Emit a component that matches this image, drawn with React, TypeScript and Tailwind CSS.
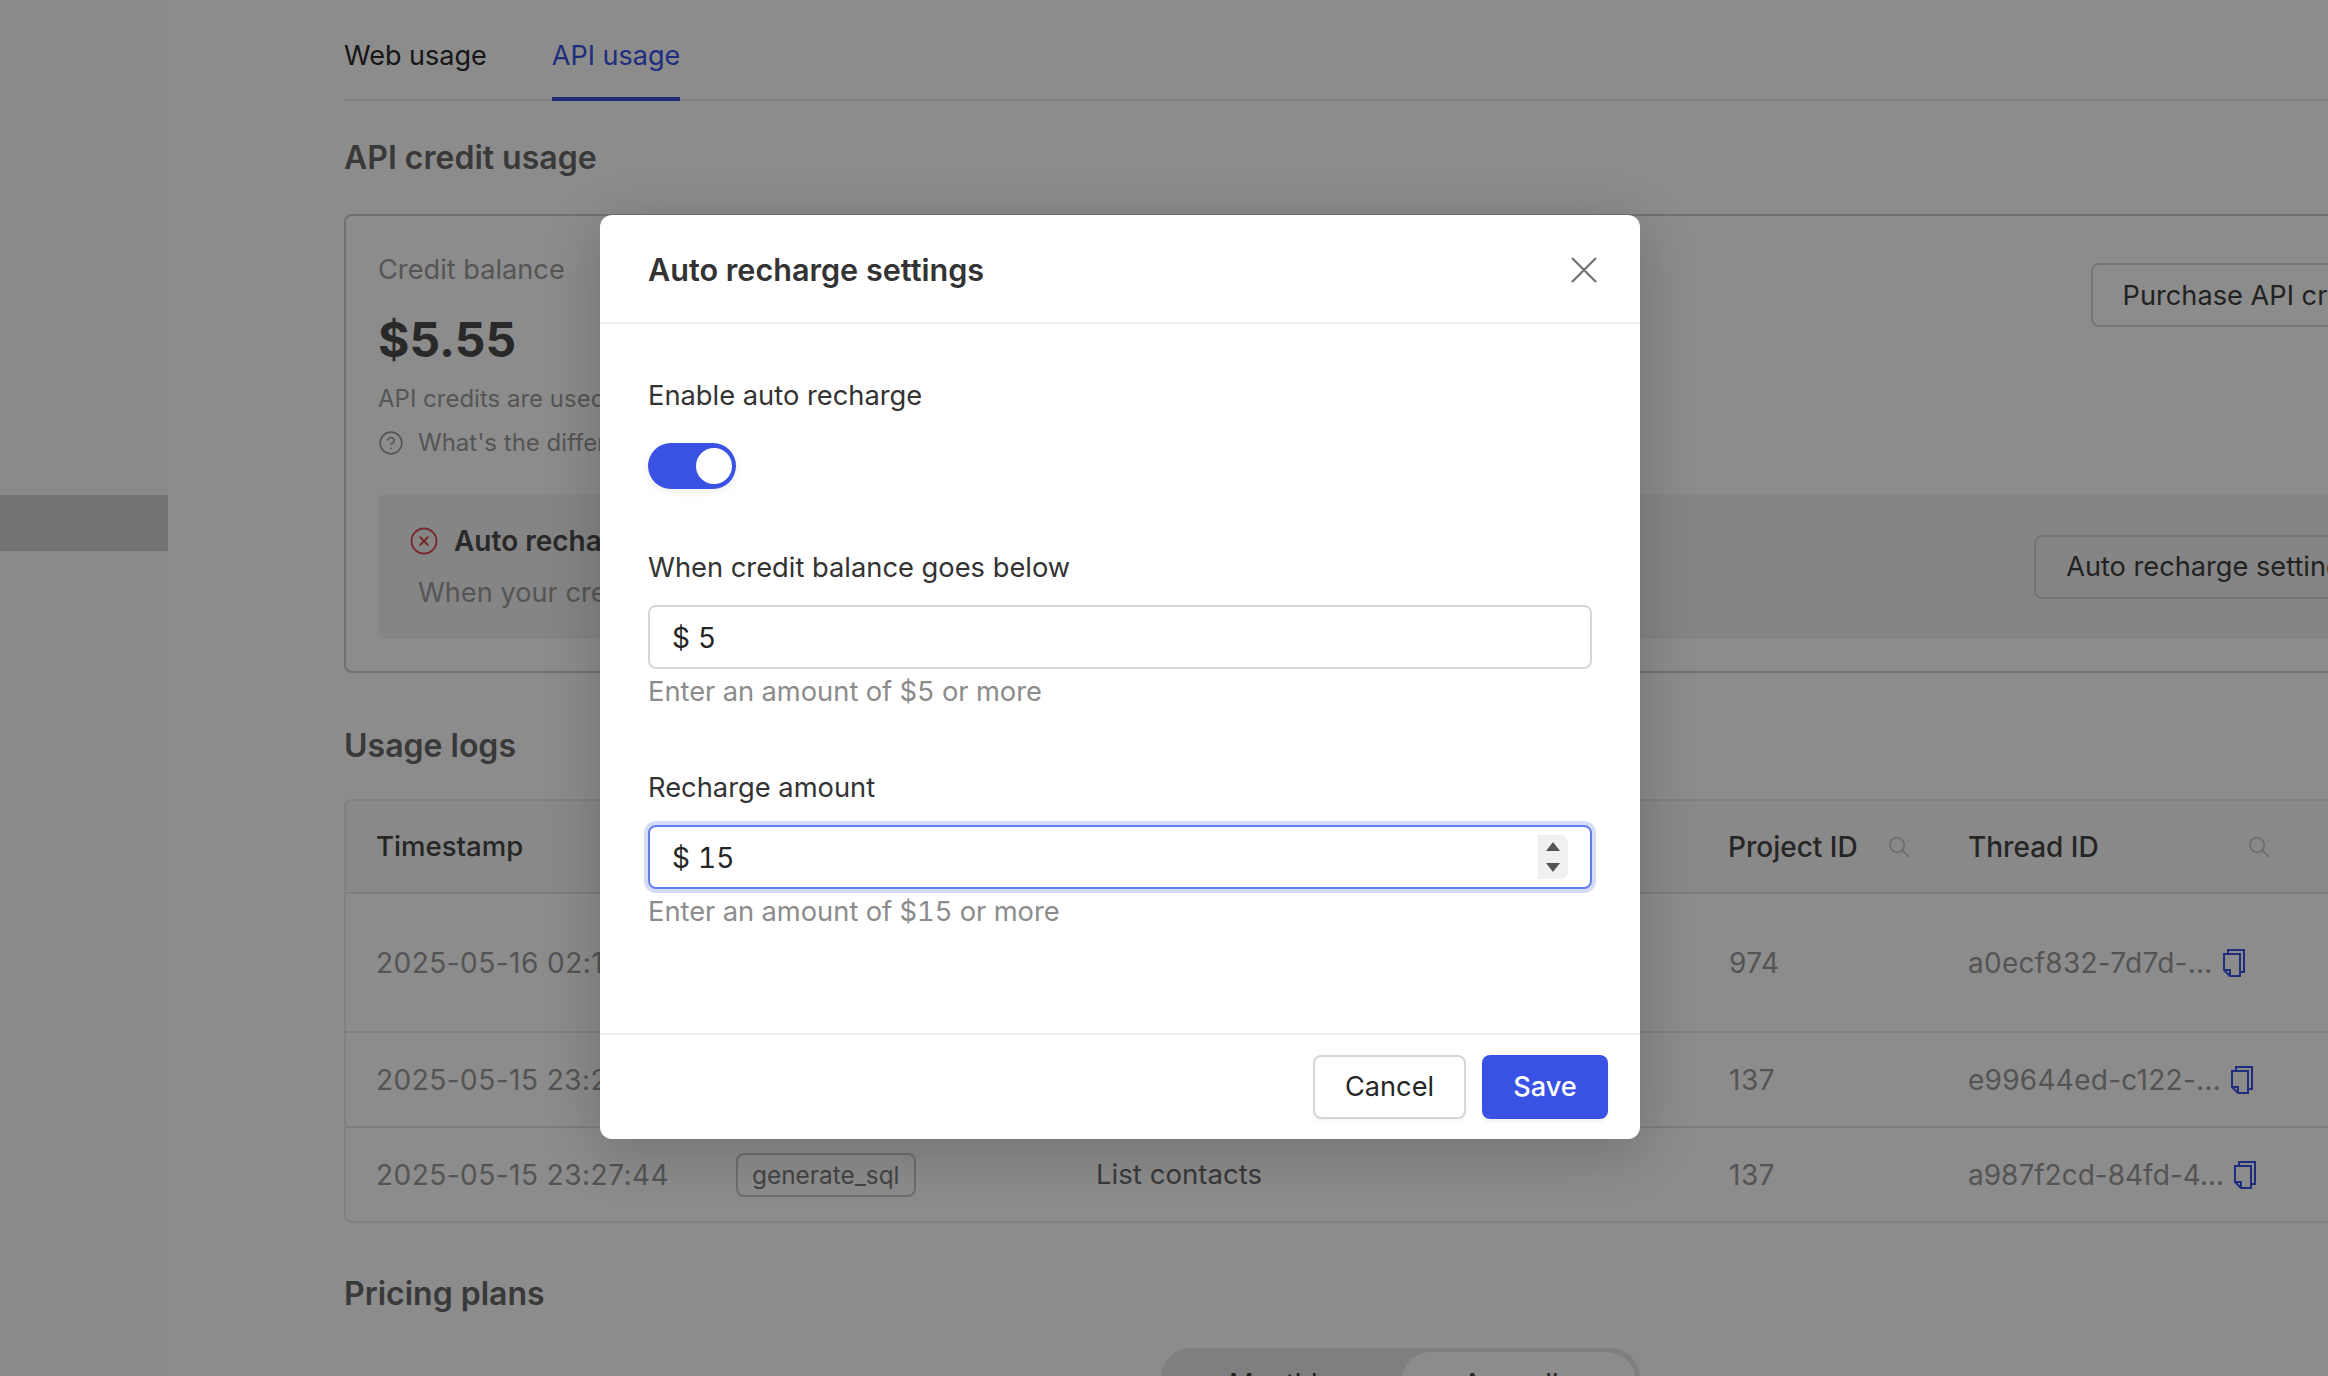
import { CircleHelp, CircleX } from "lucide-react";

const rows = [
  { time: "2025-05-16 02:14:09", project: "974", thread: "a0ecf832-7d7d-...", h: "h-[139px]", idTrack: "tracking-[0.26px]" },
  { time: "2025-05-15 23:29:12", project: "137", thread: "e99644ed-c122-...", h: "h-[95px]", idTrack: "tracking-[0.26px]" },
  { time: "2025-05-15 23:27:44", project: "137", thread: "a987f2cd-84fd-4...", h: "h-[94px]", idTrack: "tracking-normal" },
];

function SearchIcon() {
  return (
    <svg className="w-[22px] h-[22px] text-[#c4c4c4]" viewBox="0 0 22 22" fill="none" stroke="currentColor" strokeWidth="1.6">
      <circle cx="9" cy="9" r="7.2" />
      <path d="M14.2 14.2 21 21" strokeLinecap="round" />
    </svg>
  );
}

function CopyIcon() {
  return (
    <svg className="w-[22px] h-[28px] flex-shrink-0 text-[#3a52e4]" viewBox="0 0 22 28" fill="none" stroke="currentColor" strokeWidth="2">
      <path d="M1 5h16v22H7l-6-6z" />
      <path d="M1 21h6v6" />
      <path d="M5 5V1h16v22h-4" />
    </svg>
  );
}

function MoneyField({ value, focused }: { value: string; focused?: boolean }) {
  return (
    <div
      className={
        focused
          ? "flex items-center h-[64px] pl-[22px] pr-[4px] bg-white rounded-[8px] border-2 border-[#5f7ff0] ring-4 ring-[#d6dcf8]"
          : "flex items-center h-[64px] pl-[22px] pr-[4px] bg-white rounded-[8px] border-2 border-[#d6d6d6]"
      }
    >
      <span className="text-[28px] text-[#262626] mr-[8px] pt-[2px]">$</span>
      <input
        readOnly
        value={value}
        className="flex-1 min-w-0 pt-[2px] bg-transparent outline-none text-[28px] tabular-nums text-[#262626]"
      />
      {focused && (
        <div className="flex flex-col items-center justify-center gap-[12px] w-[30px] h-[44px] mr-[18px] bg-[#f0f0f0] rounded-r-[8px]">
          <svg className="w-[14px] h-[9px] text-[#555555]" viewBox="0 0 14 9" fill="currentColor">
            <path d="M7 0l7 9H0z" />
          </svg>
          <svg className="w-[14px] h-[9px] text-[#555555]" viewBox="0 0 14 9" fill="currentColor">
            <path d="M0 0h14L7 9z" />
          </svg>
        </div>
      )}
    </div>
  );
}

export default function App() {
  return (
    <div className="relative w-[2328px] h-[1376px] overflow-hidden bg-white font-['Inter',sans-serif] antialiased flex">
      {/* sidebar */}
      <aside className="w-[168px] flex-shrink-0 bg-[#fbfbfb] pt-[495px]">
        <div className="h-[56px] bg-[#d2d2d2]" />
      </aside>

      {/* main page */}
      <main className="flex-shrink-0 w-[2111px] ml-[176px]">
        <nav className="flex gap-[65px] h-[101px] border-b-2 border-[#e8e8e8] text-[27px]">
          <span className="h-[101px] pt-[36px] leading-[40px] text-[#282828]">Web usage</span>
          <span className="h-[101px] pt-[36px] leading-[40px] text-[#3a52e4] border-b-4 border-[#3a52e4]">API usage</span>
        </nav>

        <h2 className="mt-[37px] text-[32px] leading-[40px] font-semibold text-[#696969]">API credit usage</h2>

        <section className="mt-[36px] h-[459px] border-2 border-[#cccccc] rounded-[8px] px-[32px] pt-[34px]">
          <div className="flex justify-between">
            <div>
              <p className="text-[27.2px] leading-[40px] text-[#9c9c9c]">Credit balance</p>
              <p className="mt-[20px] text-[48px] leading-[60px] font-bold text-[#4c4c4c]">$5.55</p>
              <p className="mt-[12px] text-[24px] leading-[34px] text-[#9c9c9c]">API credits are used for API calls</p>
              <div className="mt-[10px] flex items-center gap-[14px] text-[24px] leading-[34px] text-[#9c9c9c]">
                <CircleHelp className="w-[26px] h-[26px]" strokeWidth={1.5} />
                <span>What's the difference?</span>
              </div>
            </div>
            <button className="h-[64px] mt-[13px] px-[30px] pt-[2px] rounded-[8px] border-2 border-[#d5d5d5] text-[27.2px] text-[#3e3e3e]">
              Purchase API credits
            </button>
          </div>

          <div className="mt-[34px] h-[145px] rounded-[8px] bg-[#f2f2f2] flex justify-between items-center pl-[31px] pr-[32px]">
            <div>
              <div className="flex items-center gap-[15px] text-[28px] leading-[40px] font-semibold text-[#4c4c4c]">
                <CircleX className="w-[30px] h-[30px] text-[#d94a4a]" strokeWidth={1.5} />
                <span>Auto recharge is off</span>
              </div>
              <p className="mt-[12px] pl-[9px] text-[27.2px] leading-[40px] text-[#9c9c9c]">When your credit balance</p>
            </div>
            <button className="h-[64px] px-[30px] pt-[2px] rounded-[8px] border-2 border-[#d5d5d5] text-[27.2px] text-[#3e3e3e]">
              Auto recharge settings
            </button>
          </div>
        </section>

        <h2 className="mt-[53px] text-[32px] leading-[40px] font-semibold text-[#696969]">Usage logs</h2>

        <section className="mt-[33px] border-2 border-[#ececec] rounded-[8px] overflow-hidden">
          <table className="w-full table-fixed border-collapse text-[28px]">
            <colgroup>
              <col className="w-[358px]" />
              <col className="w-[360px]" />
              <col className="w-[632px]" />
              <col className="w-[240px]" />
              <col />
            </colgroup>
            <thead>
              <tr className="h-[92px] bg-[#fafafa] text-left font-medium text-[#454545]">
                <th className="pl-[30px] font-medium text-[27.6px]">Timestamp</th>
                <th />
                <th />
                <th className="pl-[32px] font-medium">
                  <div className="flex items-center w-[182px] justify-between">
                    Project ID <SearchIcon />
                  </div>
                </th>
                <th className="pl-[32px] font-medium">
                  <div className="flex items-center w-[302px] justify-between">
                    Thread ID <SearchIcon />
                  </div>
                </th>
              </tr>
            </thead>
            <tbody>
              {rows.map((r) => (
                <tr key={r.thread} className={`${r.h} border-t-2 border-[#e6e6e6] text-[#9a9a9a]`}>
                  <td className="pl-[30px] whitespace-nowrap tracking-[0.47px]">{r.time}</td>
                  <td className="pl-[32px]">
                    {r.thread.startsWith("a987") && (
                      <span className="inline-block h-[44px] px-[14px] rounded-[8px] border-2 border-[#c8c8c8] text-[24.4px] leading-[40px] text-[#7c7c7c]">
                        generate_sql
                      </span>
                    )}
                  </td>
                  <td className="pl-[32px] text-[27.6px] text-[#696969]">{r.thread.startsWith("a987") && "List contacts"}</td>
                  <td className="pl-[33px] tracking-[0.5px]">{r.project}</td>
                  <td className="pl-[32px]">
                    <div className="flex items-center gap-[10px]">
                      <span className={`whitespace-nowrap ${r.idTrack}`}>{r.thread}</span>
                      <CopyIcon />
                    </div>
                  </td>
                </tr>
              ))}
            </tbody>
          </table>
        </section>

        <h2 className="mt-[51px] text-[32px] leading-[40px] font-semibold text-[#696969]">Pricing plans</h2>

        <div className="mt-[34px] ml-[817px] w-[479px] h-[72px] rounded-[30px] bg-[#e8e8e8] flex text-[27.2px] text-[#3e3e3e]">
          <div className="w-[240px] pt-[16px] text-center leading-[40px]">Monthly</div>
          <div className="w-[235px] mt-[4px] pt-[12px] rounded-[30px] bg-white text-center leading-[40px]">Annually</div>
        </div>
      </main>

      {/* backdrop + dialog */}
      <div className="absolute inset-0 bg-black/45" />
      <div className="absolute left-[600px] top-[215px] w-[1040px] h-[924px] bg-white rounded-[12px] shadow-[0_12px_60px_rgba(0,0,0,0.2)] flex flex-col">
        <header className="flex items-center justify-between h-[109px] flex-shrink-0 border-b-2 border-[#f0f0f0] pl-[48px] pr-[43px] pt-[2px]">
          <h3 className="text-[30.6px] font-semibold text-[#333333]">Auto recharge settings</h3>
          <button aria-label="Close">
            <svg className="w-[26px] h-[26px] text-[#777777]" viewBox="0 0 26 26" stroke="currentColor" strokeWidth="2.4" fill="none">
              <path d="M1 1l24 24M25 1 1 25" />
            </svg>
          </button>
        </header>

        <div className="flex-1 px-[48px] pt-[51px] text-[27.3px]">
          <p className="leading-[42px] text-[#333333]">Enable auto recharge</p>
          <div className="mt-[26px] w-[88px] h-[46px] rounded-full bg-[#3a52e4] flex items-center justify-end pr-[4px] shadow-[0_3px_8px_rgba(0,0,0,0.08)]">
            <div className="w-[36px] h-[36px] rounded-full bg-white" />
          </div>

          <p className="mt-[58px] leading-[42px] text-[#333333]">When credit balance goes below</p>
          <div className="mt-[16px]">
            <MoneyField value="5" />
          </div>
          <p className="mt-[3px] leading-[40px] tabular-nums text-[#8c8c8c]">Enter an amount of $5 or more</p>

          <p className="mt-[55px] leading-[42px] text-[#333333]">Recharge amount</p>
          <div className="mt-[16px]">
            <MoneyField value="15" focused />
          </div>
          <p className="mt-[3px] leading-[40px] tabular-nums text-[#8c8c8c]">Enter an amount of $15 or more</p>
        </div>

        <footer className="h-[106px] flex-shrink-0 border-t-2 border-[#f0f0f0] flex justify-end items-start pt-[20px] pr-[32px] gap-[16px]">
          <button className="w-[153px] h-[64px] rounded-[8px] bg-white border-2 border-[#d6d6d6] text-[27.2px] text-[#262626] shadow-[0_3px_4px_rgba(0,0,0,0.04)]">
            Cancel
          </button>
          <button className="w-[126px] h-[64px] rounded-[8px] bg-[#3a52e4] text-[27.2px] font-medium text-white shadow-[0_3px_4px_rgba(0,0,0,0.06)]">
            Save
          </button>
        </footer>
      </div>
    </div>
  );
}
